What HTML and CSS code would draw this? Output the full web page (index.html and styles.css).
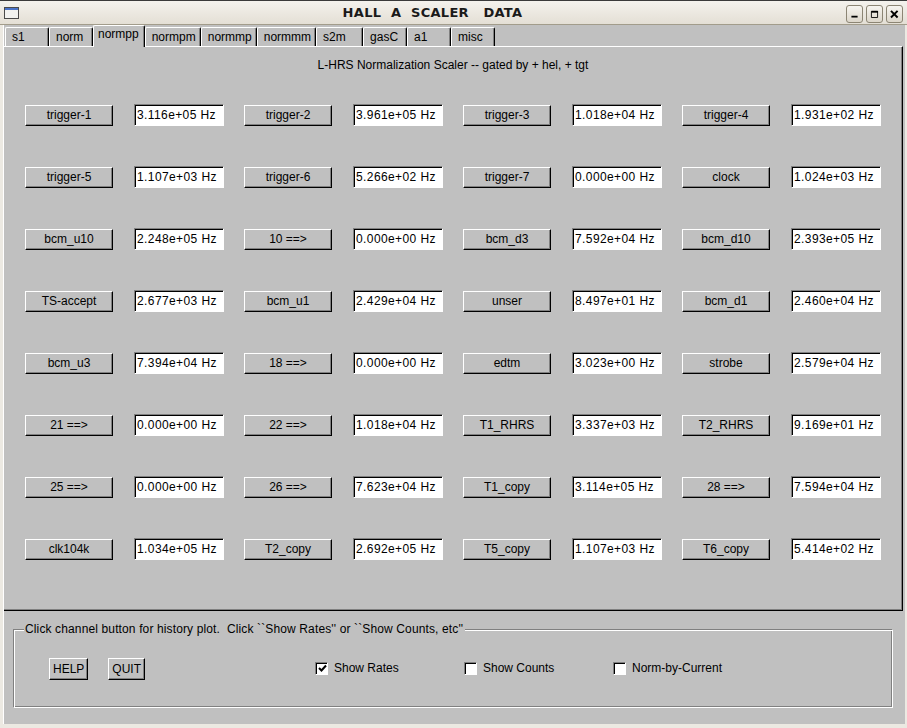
FILE: index.html
```html
<!DOCTYPE html>
<html lang="en">
<head>
    <meta charset="UTF-8">
    <title>HALL A SCALER DATA</title>
    <link rel="stylesheet" href="styles.css">
</head>
<body>

    <div class="window">
        <div class="titlebar">
            <svg class="win-icon" width="15" height="12" viewBox="0 0 15 12">
                <rect x="0.5" y="0.5" width="14" height="11" fill="#f2f2f0" stroke="#4a4a4a"/>
                <rect x="1" y="1" width="13" height="2" fill="#4b74c8"/>
            </svg>
            <div class="title">HALL  A  SCALER   DATA</div>
            <div class="wm-buttons">
                <span class="wm-btn">
                    <svg width="17" height="18" viewBox="0 0 17 18"><rect x="5" y="11" width="7" height="2" fill="#000"/></svg>
                </span>
                <span class="wm-btn">
                    <svg width="17" height="18" viewBox="0 0 17 18"><path d="M5 6 H12 V13 H5 Z" fill="none" stroke="#000" stroke-width="1"/><rect x="5" y="5.5" width="7.5" height="2" fill="#000"/></svg>
                </span>
                <span class="wm-btn">
                    <svg width="17" height="18" viewBox="0 0 17 18"><path d="M4.5 5.5 L12 13 M12 5.5 L4.5 13" stroke="#000" stroke-width="2.2"/></svg>
                </span>
            </div>
        </div>

        <div class="client">
            <div class="tabs">
                <div class="tab">s1</div>
                <div class="tab">norm</div>
                <div class="tab selected">normpp</div>
                <div class="tab">normpm</div>
                <div class="tab">normmp</div>
                <div class="tab">normmm</div>
                <div class="tab wide">s2m</div>
                <div class="tab">gasC</div>
                <div class="tab">a1</div>
                <div class="tab">misc</div>
            </div>

            <div class="panel">
                <div class="panel-title">L-HRS Normalization Scaler -- gated by + hel, + tgt</div>

                <div class="grid">
                    <div class="cell"><button class="chan">trigger-1</button><div class="rate">3.116e+05 Hz</div></div>
                    <div class="cell"><button class="chan">trigger-2</button><div class="rate">3.961e+05 Hz</div></div>
                    <div class="cell"><button class="chan">trigger-3</button><div class="rate">1.018e+04 Hz</div></div>
                    <div class="cell"><button class="chan">trigger-4</button><div class="rate">1.931e+02 Hz</div></div>

                    <div class="cell"><button class="chan">trigger-5</button><div class="rate">1.107e+03 Hz</div></div>
                    <div class="cell"><button class="chan">trigger-6</button><div class="rate">5.266e+02 Hz</div></div>
                    <div class="cell"><button class="chan">trigger-7</button><div class="rate">0.000e+00 Hz</div></div>
                    <div class="cell"><button class="chan">clock</button><div class="rate">1.024e+03 Hz</div></div>

                    <div class="cell"><button class="chan">bcm_u10</button><div class="rate">2.248e+05 Hz</div></div>
                    <div class="cell"><button class="chan">10 ==&gt;</button><div class="rate">0.000e+00 Hz</div></div>
                    <div class="cell"><button class="chan">bcm_d3</button><div class="rate">7.592e+04 Hz</div></div>
                    <div class="cell"><button class="chan">bcm_d10</button><div class="rate">2.393e+05 Hz</div></div>

                    <div class="cell"><button class="chan">TS-accept</button><div class="rate">2.677e+03 Hz</div></div>
                    <div class="cell"><button class="chan">bcm_u1</button><div class="rate">2.429e+04 Hz</div></div>
                    <div class="cell"><button class="chan">unser</button><div class="rate">8.497e+01 Hz</div></div>
                    <div class="cell"><button class="chan">bcm_d1</button><div class="rate">2.460e+04 Hz</div></div>

                    <div class="cell"><button class="chan">bcm_u3</button><div class="rate">7.394e+04 Hz</div></div>
                    <div class="cell"><button class="chan">18 ==&gt;</button><div class="rate">0.000e+00 Hz</div></div>
                    <div class="cell"><button class="chan">edtm</button><div class="rate">3.023e+00 Hz</div></div>
                    <div class="cell"><button class="chan">strobe</button><div class="rate">2.579e+04 Hz</div></div>

                    <div class="cell"><button class="chan">21 ==&gt;</button><div class="rate">0.000e+00 Hz</div></div>
                    <div class="cell"><button class="chan">22 ==&gt;</button><div class="rate">1.018e+04 Hz</div></div>
                    <div class="cell"><button class="chan">T1_RHRS</button><div class="rate">3.337e+03 Hz</div></div>
                    <div class="cell"><button class="chan">T2_RHRS</button><div class="rate">9.169e+01 Hz</div></div>

                    <div class="cell"><button class="chan">25 ==&gt;</button><div class="rate">0.000e+00 Hz</div></div>
                    <div class="cell"><button class="chan">26 ==&gt;</button><div class="rate">7.623e+04 Hz</div></div>
                    <div class="cell"><button class="chan">T1_copy</button><div class="rate">3.114e+05 Hz</div></div>
                    <div class="cell"><button class="chan">28 ==&gt;</button><div class="rate">7.594e+04 Hz</div></div>

                    <div class="cell"><button class="chan">clk104k</button><div class="rate">1.034e+05 Hz</div></div>
                    <div class="cell"><button class="chan">T2_copy</button><div class="rate">2.692e+05 Hz</div></div>
                    <div class="cell"><button class="chan">T5_copy</button><div class="rate">1.107e+03 Hz</div></div>
                    <div class="cell"><button class="chan">T6_copy</button><div class="rate">5.414e+02 Hz</div></div>
                </div>
            </div>

            <div class="bottom">
                <div class="frame">
                    <span class="legend">Click channel button for history plot.  Click ``Show Rates'' or ``Show Counts, etc''</span>

                    <div class="actions">
                        <button class="cmd">HELP</button>
                        <button class="cmd">QUIT</button>
                    </div>

                    <div class="options">
                        <label class="option">
                            <span class="box">
                                <svg width="9" height="9" viewBox="0 0 9 9"><path d="M1 4 L3.5 6.5 L8 1.5" fill="none" stroke="#000" stroke-width="2"/></svg>
                            </span>
                            Show Rates
                        </label>
                        <label class="option"><span class="box"></span>Show Counts</label>
                        <label class="option"><span class="box"></span>Norm-by-Current</label>
                    </div>
                </div>
            </div>
        </div>
    </div>

</body>
</html>
```

FILE: styles.css
```css
body {
    margin: 0;
    background-color: #ece9e2;
    font-family: "Liberation Sans", Arial, sans-serif;
    font-size: 12px;
    color: #000;
}

.window {
    width: 907px;
    height: 728px;
    box-sizing: border-box;
    border-top: 1px solid #3a3a3a;
    display: flex;
    flex-direction: column;
}

/* window manager title bar */
.titlebar {
    height: 23px;
    flex: none;
    display: flex;
    align-items: center;
    padding: 0 4px;
    background: linear-gradient(#f4f2ed, #e4dfd5);
    border-bottom: 1px solid #a29c8b;
}

.win-icon {
    flex: none;
}

.title {
    flex: 1;
    text-align: center;
    white-space: pre;
    font-family: "DejaVu Sans", sans-serif;
    font-weight: bold;
    font-size: 13px;
    letter-spacing: 0.3px;
    color: #1a1a1a;
}

.wm-buttons {
    display: flex;
    gap: 3px;
    margin-top: 2px;
}

.wm-btn {
    width: 17px;
    height: 18px;
    box-sizing: border-box;
    border: 1px solid #8c8574;
    border-radius: 3px;
    background: linear-gradient(#f7f5f0, #dcd6ca);
    display: flex;
    align-items: center;
    justify-content: center;
}

.wm-btn svg {
    display: block;
}

/* application area */
.client {
    flex: 1;
    margin: 0 2px 4px 3px;
    background-color: #c0c0c0;
    border-left: 1px solid #fff;
    display: flex;
    flex-direction: column;
}

.tabs {
    height: 21px;
    flex: none;
    display: flex;
    align-items: flex-end;
    padding-left: 1px;
}

.tab {
    height: 19px;
    min-width: 44px;
    box-sizing: border-box;
    padding: 0 4px 0 6px;
    line-height: 18px;
    border-top: 1px solid #fff;
    border-left: 1px solid #fff;
    border-right: 1px solid #000;
    border-radius: 2px 2px 0 0;
    box-shadow: inset -1px 0 0 #808080;
    background-color: #c0c0c0;
}

.tab.wide {
    min-width: 47px;
}

.tab.selected {
    height: 22px;
    margin-bottom: -1px;
    padding: 0 5px 0 4px;
    line-height: 16px;
    position: relative;
    z-index: 1;
}

.panel {
    height: 565px;
    flex: none;
    box-sizing: border-box;
    margin-right: 2px;
    border-top: 1px solid #fff;
    border-right: 1px solid #000;
    border-bottom: 1px solid #000;
    box-shadow: inset -1px -1px 0 #808080;
}

.panel-title {
    margin-top: 10px;
    line-height: 16px;
    text-align: center;
}

.grid {
    display: grid;
    grid-template-columns: repeat(4, 199px);
    column-gap: 20px;
    row-gap: 40px;
    margin: 31px 0 0 21px;
}

.cell {
    height: 22px;
    display: flex;
    align-items: center;
    gap: 21px;
}

button {
    font-family: inherit;
    font-size: 12px;
    color: #000;
    background-color: #c0c0c0;
    border: 1px solid;
    border-color: #fff #000 #000 #fff;
    box-shadow: inset -1px -1px 0 #808080;
    padding: 0;
    margin: 0;
    box-sizing: border-box;
}

.chan {
    width: 88px;
    height: 21px;
}

.rate {
    width: 90px;
    height: 22px;
    box-sizing: border-box;
    border: 1px solid;
    border-color: #808080 #fff #fff #808080;
    box-shadow: inset 1px 1px 0 #000;
    background-color: #fff;
    padding-left: 2px;
    line-height: 20px;
    letter-spacing: 0.4px;
    white-space: nowrap;
}

/* bottom control frame */
.bottom {
    flex: 1;
    padding: 18px 12px 0 9px;
}

.frame {
    position: relative;
    height: 79px;
    box-sizing: border-box;
    border: 1px solid;
    border-color: #808080 #fff #fff #808080;
    box-shadow: inset 1px 1px 0 #fff, inset -1px -1px 0 #808080;
    display: flex;
    align-items: center;
    padding-left: 35px;
}

.legend {
    position: absolute;
    top: -9px;
    left: 10px;
    padding: 0 2px 0 1px;
    line-height: 16px;
    letter-spacing: 0.13px;
    white-space: pre;
    background-color: #c0c0c0;
}

.actions {
    width: 96px;
    display: flex;
    gap: 20px;
}

.cmd {
    height: 22px;
    padding: 0 3px;
}

.options {
    display: flex;
    margin-left: 170px;
    margin-top: -1px;
}

.option {
    width: 149px;
    display: flex;
    align-items: center;
    gap: 6px;
}

.box {
    width: 13px;
    height: 13px;
    box-sizing: border-box;
    border: 1px solid;
    border-color: #808080 #fff #fff #808080;
    box-shadow: inset 1px 1px 0 #000;
    background-color: #fff;
    display: flex;
    align-items: center;
    justify-content: center;
}

.box svg {
    display: block;
    margin: 1px 0 0 1px;
}
```
